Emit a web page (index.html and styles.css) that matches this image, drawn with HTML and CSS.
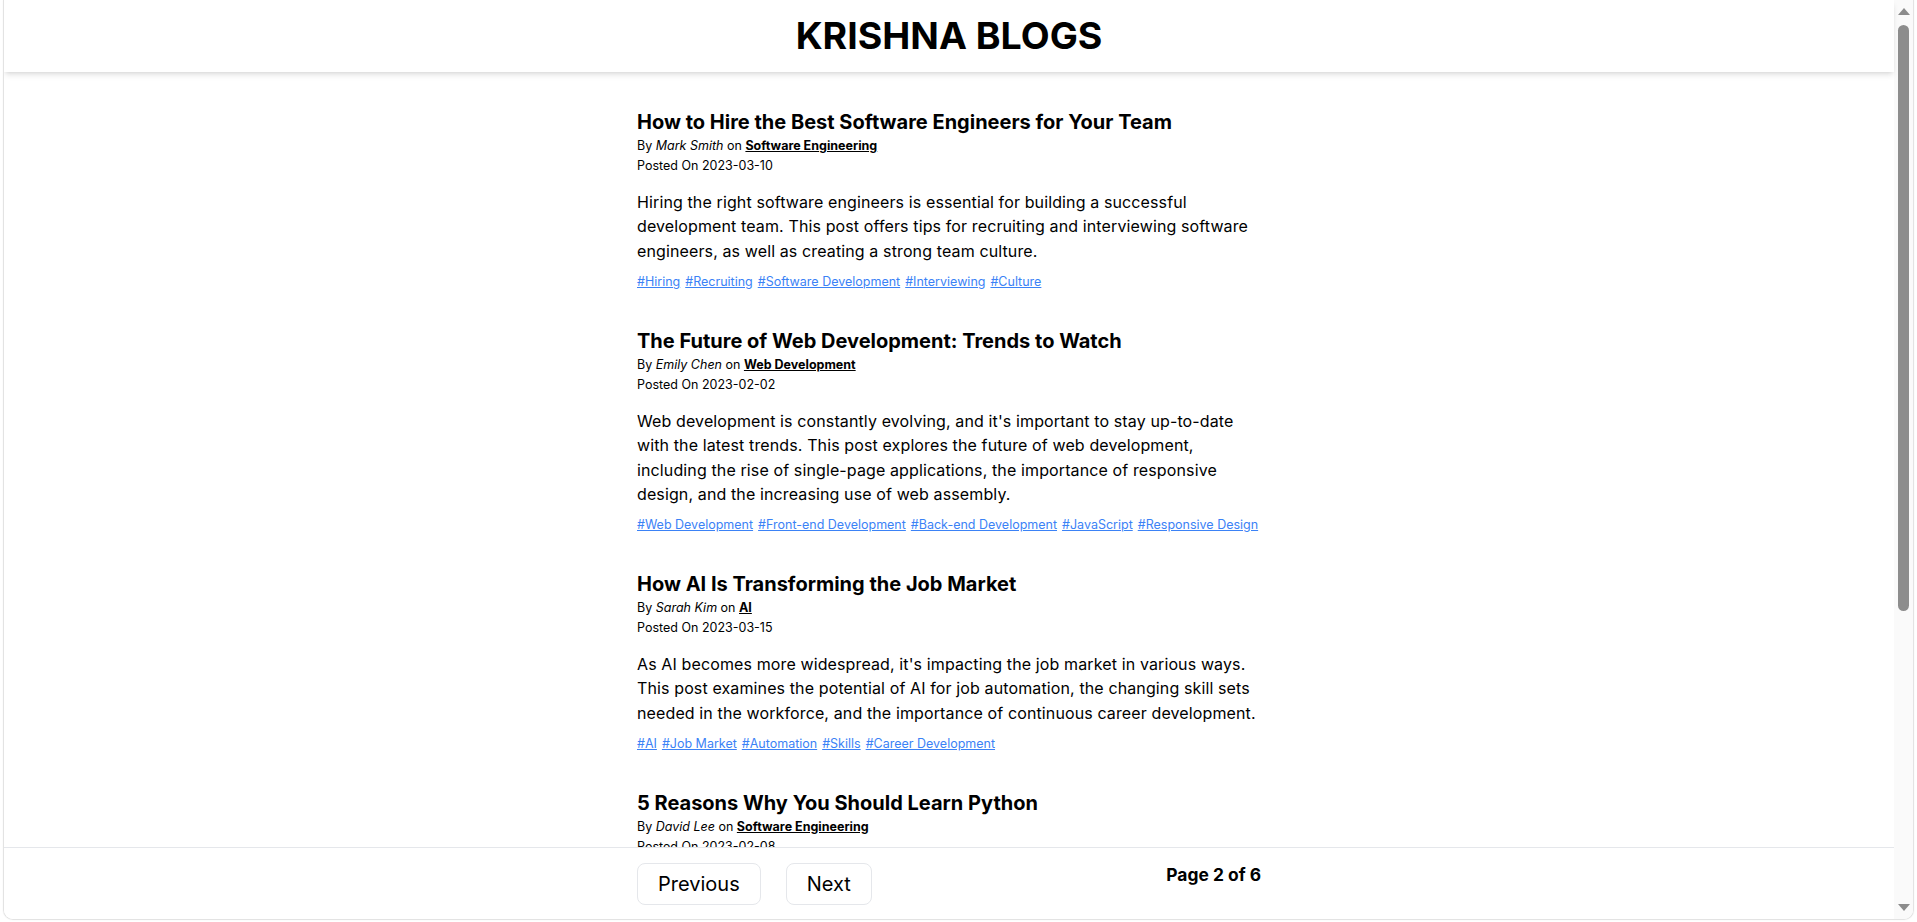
FILE: index.html
```html
<!DOCTYPE html>
<html lang="en">
<head>
<meta charset="utf-8">
<title>Krishna Blogs</title>
<link rel="stylesheet" href="styles.css">
</head>
<body>
<div class="window">
  <div class="page">
    <header class="site-header">
      <h1 class="site-title">KRISHNA BLOGS</h1>
    </header>
    <main class="main">
      <div class="container">
        <article class="post">
          <h2 class="post-title">How to Hire the Best Software Engineers for Your Team</h2>
          <div class="meta">By <span class="author">Mark Smith</span> on <a class="category" href="#">Software Engineering</a></div>
          <div class="meta">Posted On 2023-03-10</div>
          <p class="excerpt">Hiring the right software engineers is essential for building a successful development team. This post offers tips for recruiting and interviewing software engineers, as well as creating a strong team culture.</p>
          <div class="tags">
            <a class="tag" href="#">#Hiring</a>
            <a class="tag" href="#">#Recruiting</a>
            <a class="tag" href="#">#Software Development</a>
            <a class="tag" href="#">#Interviewing</a>
            <a class="tag" href="#">#Culture</a>
          </div>
        </article>
        <article class="post">
          <h2 class="post-title">The Future of Web Development: Trends to Watch</h2>
          <div class="meta">By <span class="author">Emily Chen</span> on <a class="category" href="#">Web Development</a></div>
          <div class="meta">Posted On 2023-02-02</div>
          <p class="excerpt">Web development is constantly evolving, and it's important to stay up-to-date with the latest trends. This post explores the future of web development, including the rise of single-page applications, the importance of responsive design, and the increasing use of web assembly.</p>
          <div class="tags">
            <a class="tag" href="#">#Web Development</a>
            <a class="tag" href="#">#Front-end Development</a>
            <a class="tag" href="#">#Back-end Development</a>
            <a class="tag" href="#">#JavaScript</a>
            <a class="tag" href="#">#Responsive Design</a>
          </div>
        </article>
        <article class="post">
          <h2 class="post-title">How AI Is Transforming the Job Market</h2>
          <div class="meta">By <span class="author">Sarah Kim</span> on <a class="category" href="#">AI</a></div>
          <div class="meta">Posted On 2023-03-15</div>
          <p class="excerpt">As AI becomes more widespread, it's impacting the job market in various ways. This post examines the potential of AI for job automation, the changing skill sets needed in the workforce, and the importance of continuous career development.</p>
          <div class="tags">
            <a class="tag" href="#">#AI</a>
            <a class="tag" href="#">#Job Market</a>
            <a class="tag" href="#">#Automation</a>
            <a class="tag" href="#">#Skills</a>
            <a class="tag" href="#">#Career Development</a>
          </div>
        </article>
        <article class="post">
          <h2 class="post-title">5 Reasons Why You Should Learn Python</h2>
          <div class="meta">By <span class="author">David Lee</span> on <a class="category" href="#">Software Engineering</a></div>
          <div class="meta">Posted On 2023-02-08</div>
        </article>
      </div>
    </main>
    <footer class="footer">
      <div class="footer-inner">
        <div class="pager">
          <button class="btn" type="button">Previous</button>
          <button class="btn" type="button">Next</button>
        </div>
        <div class="page-info">Page 2 of 6</div>
      </div>
    </footer>
  </div>
  <div class="scrollbar">
    <div class="arrow-up"></div>
    <div class="thumb"></div>
    <div class="track-space"></div>
    <div class="arrow-down"></div>
  </div>
</div>
</body>
</html>
```

FILE: styles.css
```css
* {
  box-sizing: border-box;
}

html,
body {
  margin: 0;
  height: 100%;
}

body {
  background: #ffffff;
  font-family: Inter, "Noto Sans", "Liberation Sans", sans-serif;
  color: #000000;
  overflow: hidden;
}

.window {
  margin: 0 3px;
  height: 920px;
  border: 1px solid #e3e3e3;
  border-top: none;
  border-radius: 0 0 10px 10px;
  display: flex;
  overflow: hidden;
  box-shadow: 0 0 2px rgba(0, 0, 0, 0.06);
}

.page {
  flex: 1;
  min-width: 0;
  display: flex;
  flex-direction: column;
}

.site-header {
  height: 72px;
  padding: 16px 0;
  text-align: center;
  background: #ffffff;
  position: relative;
  z-index: 1;
  box-shadow: 0 4px 6px -1px rgba(0, 0, 0, 0.1), 0 2px 4px -2px rgba(0, 0, 0, 0.1);
}

.site-title {
  margin: 0;
  font-size: 37.5px;
  line-height: 40px;
  font-weight: 700;
}

.main {
  flex: 1;
  min-height: 0;
  overflow: hidden;
  padding-top: 36px;
}

.container {
  width: 624px;
  margin: 0 auto;
}

.post {
  margin-bottom: 34.5px;
}

.post-title {
  margin: 0;
  font-size: 20px;
  line-height: 28px;
  font-weight: 700;
}

.meta {
  font-size: 12.5px;
  line-height: 20px;
}

.author {
  font-style: italic;
}

.category {
  color: #000000;
  font-weight: 700;
  text-decoration: underline;
}

.excerpt {
  margin: 14px 0 9px;
  font-size: 16px;
  line-height: 24.4px;
  letter-spacing: 0.12px;
}

.tags {
  display: flex;
  flex-wrap: wrap;
  column-gap: 5px;
  font-size: 12.5px;
  line-height: 20px;
}

.tag {
  color: #3b82f6;
  text-decoration: underline;
}

.footer {
  height: 72px;
  flex: none;
  border-top: 1px solid #e5e7eb;
  padding-top: 15px;
  background: #ffffff;
}

.footer-inner {
  width: 624px;
  margin: 0 auto;
  display: flex;
  justify-content: space-between;
  align-items: flex-start;
}

.pager {
  display: flex;
  gap: 25px;
}

.btn {
  font-family: inherit;
  font-size: 20px;
  line-height: 28px;
  padding: 6px 20px;
  border: 1px solid #e5e7eb;
  border-radius: 8px;
  background: #ffffff;
  color: #000000;
}

.page-info {
  margin-top: -2px;
  font-size: 17.4px;
  line-height: 28px;
  font-weight: 700;
}

.scrollbar {
  width: 19px;
  flex: none;
  background: #fafafa;
  display: flex;
  flex-direction: column;
  align-items: center;
}

.arrow-up {
  margin-top: 8px;
  width: 0;
  height: 0;
  border-left: 6px solid transparent;
  border-right: 6px solid transparent;
  border-bottom: 7px solid #8c8c8c;
}

.thumb {
  margin-top: 10px;
  width: 11px;
  height: 586px;
  border-radius: 6px;
  background: #8d8d8d;
}

.track-space {
  flex: 1;
}

.arrow-down {
  margin-bottom: 8px;
  width: 0;
  height: 0;
  border-left: 6px solid transparent;
  border-right: 6px solid transparent;
  border-top: 7px solid #8c8c8c;
}
```
